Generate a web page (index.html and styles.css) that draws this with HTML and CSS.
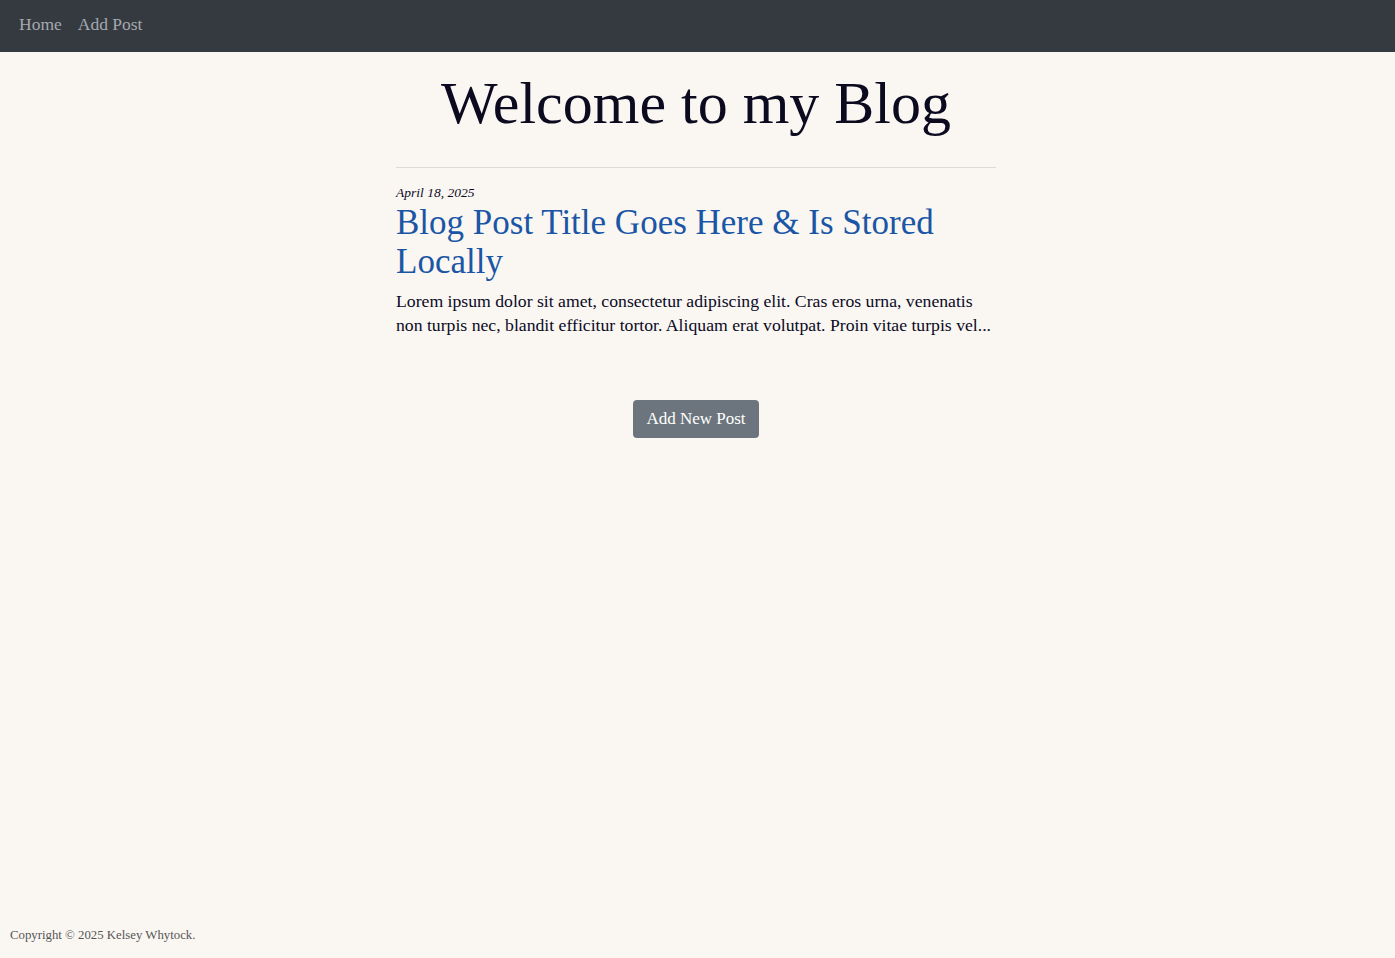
FILE: index.html
```html
<!DOCTYPE html>
<html lang="en">
<head>
<meta charset="utf-8">
<title>Blog</title>
<link rel="stylesheet" href="styles.css">
</head>
<body>
<div class="page">
  <nav class="navbar">
    <a class="nav-link" href="#">Home</a>
    <a class="nav-link" href="#">Add Post</a>
  </nav>
  <main class="container">
    <h1 class="page-title">Welcome to my Blog</h1>
    <hr class="divider">
    <article class="post">
      <p class="post-date">April 18, 2025</p>
      <h2 class="post-title"><a href="#">Blog Post Title Goes Here &amp; Is Stored Locally</a></h2>
      <p class="post-excerpt">Lorem ipsum dolor sit amet, consectetur adipiscing elit. Cras eros urna, venenatis non turpis nec, blandit efficitur tortor. Aliquam erat volutpat. Proin vitae turpis vel...</p>
    </article>
    <div class="actions">
      <a class="btn" href="#">Add New Post</a>
    </div>
  </main>
  <footer class="footer">Copyright © 2025 Kelsey Whytock.</footer>
</div>
</body>
</html>
```
FILE: styles.css
```css
html, body {
  margin: 0;
  padding: 0;
}
body {
  background: #faf7f3;
  color: #0b0a1f;
  font-family: "Liberation Serif", "DejaVu Serif", serif;
}
.page {
  min-height: 958px;
  display: flex;
  flex-direction: column;
}
.navbar {
  background: #343a40;
  height: 52px;
  box-sizing: border-box;
  display: flex;
  align-items: center;
  padding: 0 11px 4px;
}
.nav-link {
  color: #a5a9ad;
  text-decoration: none;
  font-size: 17.5px;
  padding: 0 8px;
}
.container {
  width: 600px;
  padding-right: 3px;
  margin: 0 auto;
  flex: 1;
}
.page-title {
  font-family: "Liberation Serif", serif;
  font-weight: 400;
  font-size: 60px;
  text-align: center;
  margin: 15px 0 0;
  line-height: 72px;
  color: #0b0a1f;
}
.divider {
  border: 0;
  border-top: 1px solid #dcdad6;
  margin: 28px 0 0;
}
.post-date {
  font-style: italic;
  font-size: 13.5px;
  margin: 17px 0 0;
  line-height: 16px;
}
.post-title {
  margin: 2px 0 0;
  font-weight: 400;
  font-size: 35px;
  line-height: 39px;
}
.post-title a {
  color: #1a56a5;
  text-decoration: none;
}
.post-excerpt {
  font-size: 17.7px;
  line-height: 24px;
  margin: 8px 0 0;
}
.actions {
  display: flex;
  justify-content: center;
  margin-top: 63px;
}
.btn {
  background: #6c757d;
  color: #fff;
  text-decoration: none;
  font-size: 17px;
  padding: 0 13px;
  height: 38px;
  display: flex;
  align-items: center;
  border-radius: 4px;
}
.footer {
  font-size: 12.8px;
  color: #555;
  padding: 0 10px 15px;
}
```
